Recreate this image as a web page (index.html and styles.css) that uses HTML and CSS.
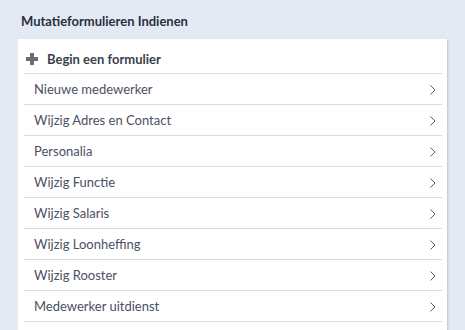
FILE: index.html
```html
<!DOCTYPE html>
<html lang="nl">
<head>
    <meta charset="UTF-8">
    <title>Mutatieformulieren Indienen</title>
    <link rel="stylesheet" href="styles.css">
</head>
<body>
    <div class="page">
        <h2 class="page-title">Mutatieformulieren Indienen</h2>

        <div class="form-card">
            <div class="form-card-header">
                <svg class="plus-icon" width="12" height="12" viewBox="0 0 12 12">
                    <rect x="4" y="0" width="4" height="12" fill="#6e6e6e"/>
                    <rect x="0" y="4" width="12" height="4" fill="#6e6e6e"/>
                </svg>
                <span>Begin een formulier</span>
            </div>

            <ul class="form-list">
                <li><span>Nieuwe medewerker</span><svg class="chevron" width="6" height="10" viewBox="0 0 6 10"><polyline points="0.5,0.5 5,5 0.5,9.5" fill="none" stroke="#5a5a5a" stroke-width="1"/></svg></li>
                <li><span>Wijzig Adres en Contact</span><svg class="chevron" width="6" height="10" viewBox="0 0 6 10"><polyline points="0.5,0.5 5,5 0.5,9.5" fill="none" stroke="#5a5a5a" stroke-width="1"/></svg></li>
                <li><span>Personalia</span><svg class="chevron" width="6" height="10" viewBox="0 0 6 10"><polyline points="0.5,0.5 5,5 0.5,9.5" fill="none" stroke="#5a5a5a" stroke-width="1"/></svg></li>
                <li><span>Wijzig Functie</span><svg class="chevron" width="6" height="10" viewBox="0 0 6 10"><polyline points="0.5,0.5 5,5 0.5,9.5" fill="none" stroke="#5a5a5a" stroke-width="1"/></svg></li>
                <li><span>Wijzig Salaris</span><svg class="chevron" width="6" height="10" viewBox="0 0 6 10"><polyline points="0.5,0.5 5,5 0.5,9.5" fill="none" stroke="#5a5a5a" stroke-width="1"/></svg></li>
                <li><span>Wijzig Loonheffing</span><svg class="chevron" width="6" height="10" viewBox="0 0 6 10"><polyline points="0.5,0.5 5,5 0.5,9.5" fill="none" stroke="#5a5a5a" stroke-width="1"/></svg></li>
                <li><span>Wijzig Rooster</span><svg class="chevron" width="6" height="10" viewBox="0 0 6 10"><polyline points="0.5,0.5 5,5 0.5,9.5" fill="none" stroke="#5a5a5a" stroke-width="1"/></svg></li>
                <li><span>Medewerker uitdienst</span><svg class="chevron" width="6" height="10" viewBox="0 0 6 10"><polyline points="0.5,0.5 5,5 0.5,9.5" fill="none" stroke="#5a5a5a" stroke-width="1"/></svg></li>
            </ul>
        </div>
    </div>
</body>
</html>
```

FILE: styles.css
```css
body {
    margin: 0;
    background: #e4eaf3;
    font-family: Lato, "Open Sans", sans-serif;
    overflow: hidden;
}

.page {
    padding: 13px 18px 0 18px;
    width: 429px;
}

.page-title {
    margin: 0 0 9px 3px;
    font-size: 13px;
    font-weight: 700;
    color: #283042;
    line-height: 17px;
}

.form-card {
    background: #fff;
    box-shadow: 1px 1px 2px rgba(0, 0, 0, 0.18);
    padding: 0 5px 20px 6px;
}

.form-card-header {
    display: flex;
    align-items: center;
    gap: 9px;
    height: 35px;
    box-sizing: border-box;
    padding: 6px 0 0 2px;
    border-bottom: 1px solid #dcdcdc;
    font-size: 13px;
    font-weight: 700;
    color: #3a3f4a;
}

.form-list {
    list-style: none;
    margin: 0;
    padding: 0;
}

.form-list li {
    display: flex;
    align-items: center;
    justify-content: space-between;
    height: 31px;
    box-sizing: border-box;
    padding: 0 6px 0 10px;
    border-bottom: 1px solid #dcdcdc;
    font-size: 13px;
    color: #4b5162;
}

.chevron {
    display: block;
    margin-top: 1px;
}
```
